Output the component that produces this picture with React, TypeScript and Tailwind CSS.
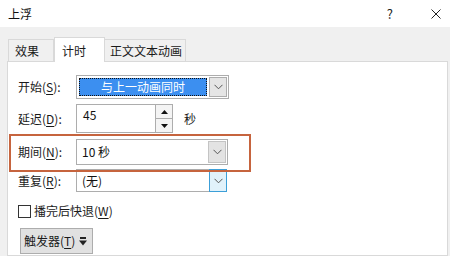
import React from 'react';

const font = { fontFamily: '"Noto Sans CJK SC", "Noto Sans", sans-serif' };

function Chevron() {
  return (
    <svg width="9" height="6" viewBox="0 0 9 6" className="block">
      <polyline points="0.5,0.8 4.5,4.8 8.5,0.8" fill="none" stroke="#555" strokeWidth="1" />
    </svg>
  );
}

function Mn({ text, k }: { text: string; k: string }) {
  return (
    <span>
      {text}(<span className="underline underline-offset-2">{k}</span>)
    </span>
  );
}

function Label({ text, k }: { text: string; k: string }) {
  return (
    <div className="w-[58px] shrink-0 text-[12px] text-[#1a1a1a] leading-none">
      <Mn text={text} k={k} />:
    </div>
  );
}

export default function App() {
  return (
    <div className="w-[450px] h-[256px] overflow-hidden bg-[#f0f0f0] flex flex-col" style={font}>
      {/* title bar */}
      <div className="h-[27px] bg-white flex items-center pl-[8px] shrink-0">
        <span className="text-[12px] text-[#111]">上浮</span>
        <div className="flex-1" />
        <span className="text-[13px] text-[#222] mr-[38px]">?</span>
        <svg width="10" height="10" viewBox="0 0 10 10" className="mr-[9px]">
          <path d="M0.5 0.5 L9.5 9.5 M9.5 0.5 L0.5 9.5" stroke="#222" strokeWidth="1" />
        </svg>
      </div>

      {/* tabs */}
      <div className="flex items-end pl-[8px] mt-[10px] h-[24px] shrink-0">
        <div className="h-[22px] w-[46px] border border-b-0 border-[#d9d9d9] bg-[#f0f0f0] flex items-center pl-[6px] text-[12px] text-[#1a1a1a]">
          效果
        </div>
        <div className="h-[25px] w-[51px] -mb-px border border-b-0 border-[#d9d9d9] bg-white flex items-start pt-[4px] pl-[7px] text-[12px] text-[#1a1a1a] relative z-10">
          计时
        </div>
        <div className="h-[22px] w-[81px] border border-b-0 border-l-0 border-[#d9d9d9] bg-[#f0f0f0] flex items-center pl-[5px] text-[12px] text-[#1a1a1a]">
          正文文本动画
        </div>
      </div>

      {/* panel */}
      <div className="relative flex-1 ml-[7px] mr-[2px] border border-[#d9d9d9] bg-white flex flex-col pl-[10px]">
        {/* 开始 */}
        <div className="flex items-center mt-[13px] h-[24px]">
          <Label text="开始" k="S" />
          <div className="w-[153px] h-[24px] border border-[#adadad] flex items-stretch p-[2px] gap-[2px]">
            <div className="flex-1 bg-[#3c8ff0] border border-dotted border-[#111] flex items-center justify-center text-[12px] text-white">
              与上一动画同时
            </div>
            <div className="w-[18px] -my-[1px] -mr-[1px] border border-[#adadad] bg-[#e5e5e5] flex items-center justify-center">
              <Chevron />
            </div>
          </div>
        </div>

        {/* 延迟 */}
        <div className="flex items-center mt-[5px] h-[29px]">
          <Label text="延迟" k="D" />
          <div className="w-[97px] h-[29px] border border-[#adadad] flex items-start">
            <div className="flex-1 pl-[6px] pt-[4px] text-[12px] text-[#111] leading-none">45</div>
            <div className="w-[17px] h-full flex flex-col">
              <div className="flex-1 border-l border-b border-[#adadad] bg-[#f4f4f4] flex items-center justify-center">
                <svg width="7" height="4" viewBox="0 0 7 4"><polygon points="3.5,0 7,4 0,4" fill="#111" /></svg>
              </div>
              <div className="flex-1 border-l border-[#adadad] bg-[#f4f4f4] flex items-center justify-center">
                <svg width="7" height="4" viewBox="0 0 7 4"><polygon points="0,0 7,0 3.5,4" fill="#111" /></svg>
              </div>
            </div>
          </div>
          <span className="ml-[11px] text-[12px] text-[#1a1a1a]">秒</span>
        </div>

        {/* 期间 */}
        <div className="flex items-center mt-[6px] h-[26px]">
          <Label text="期间" k="N" />
          <div className="w-[152px] h-[26px] border border-[#adadad] flex items-stretch">
            <div className="flex-1 pl-[5px] flex items-center text-[12px] text-[#111]">10 秒</div>
            <div className="w-[18px] my-[1px] mr-[1px] border border-[#c4c4c4] bg-[#e3e3e3] flex items-center justify-center">
              <Chevron />
            </div>
          </div>
        </div>

        {/* 重复 */}
        <div className="flex items-center mt-[4px] h-[23px]">
          <Label text="重复" k="R" />
          <div className="w-[151px] h-[23px] border border-[#adadad] flex items-stretch">
            <div className="flex-1 pl-[5px] flex items-center text-[12px] text-[#111]">(无)</div>
            <div className="w-[18px] -my-px -mr-px border border-[#3c9fd8] bg-[#e1f2fb] flex items-center justify-center">
              <Chevron />
            </div>
          </div>
        </div>

        {/* checkbox */}
        <div className="flex items-center mt-[12px] h-[14px]">
          <div className="w-[13px] h-[13px] border border-[#333] bg-white" />
          <span className="ml-[3px] text-[12px] text-[#1a1a1a] leading-none">
            <Mn text="播完后快退" k="W" />
          </span>
        </div>

        {/* trigger button */}
        <div className="mt-[10px] ml-[2px] w-[73px] h-[26px] border border-[#adadad] bg-[#e1e1e1] flex items-center pl-[3px] gap-[4px] text-[12px] text-[#1a1a1a]">
          <span className="leading-none">
            <Mn text="触发器" k="T" />
          </span>
          <svg width="8" height="9" viewBox="0 0 8 9">
            <rect x="1" y="0" width="6" height="2" fill="#222" />
            <polygon points="0,3.5 8,3.5 4,8.5" fill="#222" />
          </svg>
        </div>

        {/* highlight annotation */}
        <div className="absolute left-[1px] top-[72px] w-[242px] h-[38px] border-2 border-[#c6643e] pointer-events-none" />
      </div>
    </div>
  );
}
